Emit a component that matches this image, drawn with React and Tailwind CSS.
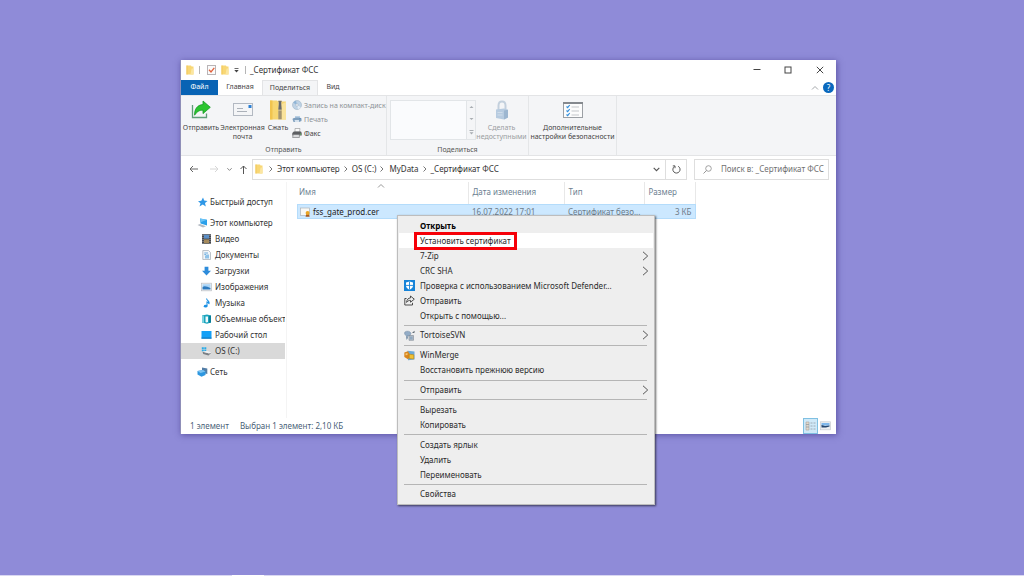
import React from "react";

function FolderIcon({ className }) {
  return (
    <svg className={className} viewBox="0 0 8 10" aria-hidden="true">
      <path d="M0.5 0.5H5L5.6 1.5H7.5V9.5H0.5Z" fill="#f8d775" />
      <path d="M5.6 3.5H7.5V9.5H4.5Z" fill="#fbe6a2" />
      <path d="M0.5 0.5H1.5V9.5H0.5Z" fill="#f2c75a" />
    </svg>
  );
}

function CheckDocIcon() {
  return (
    <svg className="h-[10px] w-[9px]" viewBox="0 0 9 10" aria-hidden="true">
      <rect x="0.5" y="0.5" width="8" height="9" fill="#fbfbfb" stroke="#b9b4b6" />
      <path d="M2 4.8L4 7L7.3 2.8" fill="none" stroke="#e2613c" strokeWidth="1.3" />
    </svg>
  );
}

function Chevron({ className, d }) {
  return (
    <svg
      className={className}
      viewBox="0 0 8 8"
      fill="none"
      stroke="currentColor"
      aria-hidden="true"
    >
      <path d={d} />
    </svg>
  );
}

const RIGHT = "M2.5 1.5L5 4L2.5 6.5";
const DOWN = "M1.5 2.5L4 5L6.5 2.5";
const UP = "M1 5.5L4 2.5L7 5.5";

function ShareIcon() {
  return (
    <svg className="h-5 w-5" viewBox="0 0 20 20" aria-hidden="true">
      <path d="M1.5 5V17.5H15.5V13.5" fill="none" stroke="#5f9d78" strokeWidth="1.3" />
      <path
        d="M12 1L19.3 7.3L12 13.6V10.2C8.5 10 6 11.5 3.6 15.2C3.4 9 6.5 4.8 12 4.6Z"
        fill="#2bc52f"
        stroke="#159a25"
        strokeWidth="0.8"
      />
    </svg>
  );
}

function MailIcon() {
  return (
    <svg className="h-5 w-5" viewBox="0 0 20 20" aria-hidden="true">
      <rect x="0.5" y="3.5" width="19" height="12" fill="#f4f5f7" stroke="#b3b9c2" />
      <path d="M4 8.5H10M4 11.5H14" stroke="#abb1b9" />
      <rect x="15.5" y="5" width="3" height="3" fill="#2b7fd4" />
    </svg>
  );
}

function ZipIcon() {
  return (
    <svg className="h-5 w-5" viewBox="0 0 20 20" aria-hidden="true">
      <path d="M2 0.5H9L10 1.5H18V19.5H2Z" fill="#f7d671" />
      <path d="M2 0.5H4.5V19.5H2Z" fill="#f1c44f" />
      <path d="M14 4L18 2V19.5H14Z" fill="#fae39b" />
      <rect x="10.3" y="0.5" width="3.4" height="19" fill="#c1b28d" />
      <path d="M10.5 1.5H13.5M10.5 12H13.5M10.5 14H13.5M10.5 16H13.5M10.5 18H13.5" stroke="#7a6d50" strokeWidth="0.9" />
      <path d="M11 1.5H13V4.5L13.6 9.5H10.4L11 4.5Z" fill="#66686c" />
    </svg>
  );
}

function DiscIcon() {
  return (
    <svg className="h-[10px] w-[10px]" viewBox="0 0 10 10" aria-hidden="true">
      <circle cx="5" cy="5" r="4.5" fill="#bfd3e6" stroke="#a9bbcd" strokeWidth="0.7" />
      <path d="M5 5L1.2 2.8A4.4 4.4 0 0 1 4 0.8Z" fill="#8fb4d6" />
      <path d="M5 5L8.8 7.2A4.4 4.4 0 0 1 6 9.2Z" fill="#e4edf5" />
      <circle cx="5" cy="5" r="1.3" fill="#f4f5f7" stroke="#9fb2c4" strokeWidth="0.6" />
    </svg>
  );
}

function PrinterIcon() {
  return (
    <svg className="h-[10px] w-[10px]" viewBox="0 0 10 10" aria-hidden="true">
      <path d="M3 2H8V4H3Z" fill="#b8cfe4" />
      <path d="M0.5 5C1.5 3.2 8 3 9.5 4.5V7L7 8H1.5Z" fill="#7f9fbd" />
      <path d="M2.5 6H7V8H3Z" fill="#d5e2ee" />
      <circle cx="8" cy="4.7" r="0.6" fill="#4c87bd" />
    </svg>
  );
}

function FaxIcon() {
  return (
    <svg className="h-[10px] w-[10px]" viewBox="0 0 10 10" aria-hidden="true">
      <path d="M3 0.5H8L7.5 4H3Z" fill="#fafafa" stroke="#8e9092" strokeWidth="0.6" />
      <path d="M0.3 5L1.8 3.5H9L9.7 5V7.5H0.3Z" fill="#5d5f62" />
      <path d="M1.2 6.5H7.4V9.5H0.6Z" fill="#d9dadc" stroke="#6f7173" strokeWidth="0.6" />
      <circle cx="8.5" cy="6.2" r="0.6" fill="#58c05a" />
    </svg>
  );
}

function LockIcon() {
  return (
    <svg className="h-5 w-5" viewBox="0 0 20 20" aria-hidden="true">
      <path d="M6.5 10V5.5C6.5 0 13.5 0 13.5 5.5V10" fill="none" stroke="#c3d0dd" strokeWidth="2" />
      <path d="M4 9.5L12 8.5L16 9.8V17.5L12 19.5L4 18Z" fill="#b7cbe0" />
      <path d="M12 10.5L16 9.8V17.5L12 19.5Z" fill="#9db6d0" />
      <path d="M5.5 12.5H10.5M5.5 15H10.5" stroke="#cfdcea" />
    </svg>
  );
}

function ChecklistIcon() {
  return (
    <svg className="h-5 w-5" viewBox="0 0 20 20" aria-hidden="true">
      <rect x="0.5" y="2.5" width="19" height="15" fill="#fcfcfc" stroke="#9ca0a5" />
      <path d="M0 3H20" stroke="#85898e" strokeWidth="2" />
      <path d="M8.5 7H16M8.5 11H16M8.5 15H16" stroke="#c3c6ca" />
      <path
        d="M3.5 6.5L4.7 7.7L6.7 5M3.5 10.5L4.7 11.7L6.7 9M3.5 14.5L4.7 15.7L6.7 13"
        fill="none"
        stroke="#3590dc"
        strokeWidth="1.2"
      />
    </svg>
  );
}

const sideIcons = {
  star: (
    <path
      d="M6 0.5L7.2 3.5L10.5 4L8 6L8.8 9.5L5.8 7.6L2.5 9.5L3.5 6.2L1 4.2L4.3 3.8Z"
      fill="#2f97e6"
    />
  ),
  computer: (
    <>
      <path d="M3 0.5L10 1.8V7.5L3.5 5.5Z" fill="#2ba0ea" />
      <path d="M3 0.5L10 1.8L4 4Z" fill="#6cc4f6" />
      <path d="M0.5 7L3 6L9 8.2L6 9.6Z" fill="#b3bac2" />
    </>
  ),
  video: (
    <>
      <rect x="1" y="0.2" width="9" height="9.6" fill="#44474d" />
      <path d="M3 0.8H8V4.6H3Z" fill="#5b8fc7" />
      <path d="M3 5.4H8V9.2H3Z" fill="#a58a5c" />
      <path d="M2 1V9.5M9 1V9.5" stroke="#c7c9cc" strokeWidth="0.7" strokeDasharray="1 1" />
    </>
  ),
  docs: (
    <>
      <path d="M1.8 0.5H7.5L9.5 2.5V9.5H1.8Z" fill="#f2f5f8" stroke="#a3abb3" strokeWidth="0.7" />
      <path d="M3.3 3H7M3.3 4.6H5" stroke="#4a9bd8" strokeWidth="0.8" />
      <path d="M5.5 4.5H8V8.5H4V6Z" fill="#8fc2e8" />
    </>
  ),
  downloads: <path d="M3.6 0.8H7.4V4.8H10L5.5 9.5L1 4.8H3.6Z" fill="#2d8cdb" />,
  images: (
    <>
      <rect x="0.5" y="1.2" width="10" height="7.6" fill="#f3f5f7" stroke="#b7bcc2" strokeWidth="0.7" />
      <path d="M1.5 2.2H9.5V5H1.5Z" fill="#a9d4f6" />
      <path d="M1.5 5C4 3.2 6 5 9.5 5.8V7.4H1.5Z" fill="#2b79be" />
    </>
  ),
  music: (
    <>
      <path d="M5.5 0.5C6 3 9 3 8 6C7.8 4.5 6.8 4.2 6 4V8" fill="none" stroke="#1c91e4" strokeWidth="1.1" />
      <ellipse cx="4.6" cy="8.2" rx="1.8" ry="1.4" fill="#1c91e4" />
    </>
  ),
  objects: (
    <>
      <path d="M1 1.5L6 0.5L10 1.5V8.5L6 9.7L1 8.5Z" fill="#1ca4bd" />
      <path d="M1 1.5L3 2.2V9L1 8.5Z" fill="#7ad3e0" />
      <path d="M4.5 2.5H7V8L5.5 8.6L4.5 8Z" fill="#f1fafc" />
      <path d="M8 2L10 1.5V8.5L8 9Z" fill="#0c7e99" />
    </>
  ),
  desktop: (
    <>
      <rect x="0.5" y="1" width="10" height="7.6" fill="#14a0f6" />
      <path d="M0.5 7.6H10.5V8.6H0.5Z" fill="#0b6fb5" />
    </>
  ),
  drive: (
    <>
      <path d="M0.8 1.2H2.8V3H0.8ZM3.3 1.2H5.3V3H3.3ZM0.8 3.4H2.8V5.2H0.8ZM3.3 3.4H5.3V5.2H3.3Z" fill="#27abe8" />
      <path d="M1.5 5.8L8 7.2L10.5 6.5L7.5 9.4L2.2 8Z" fill="#7b8086" />
      <path d="M2 5.8L6 4.8L10.5 6.4L8 7.4Z" fill="#eef0f2" />
    </>
  ),
  network: (
    <>
      <path d="M5 0.5L10.3 1.5V7L5 5.8Z" fill="#527da6" />
      <path d="M0.5 4L6 3L8.5 4.5V8L4.5 9.7L0.5 7.5Z" fill="#2d97e0" />
      <path d="M0.5 4L6 3L8.5 4.5L3.5 6Z" fill="#7cc3f1" />
    </>
  ),
};

function SideIcon({ name }) {
  return (
    <svg className="h-[10px] w-[11px] shrink-0" viewBox="0 0 11 10" aria-hidden="true">
      {sideIcons[name]}
    </svg>
  );
}

const computerItems = [
  { icon: "video", label: "Видео" },
  { icon: "docs", label: "Документы" },
  { icon: "downloads", label: "Загрузки" },
  { icon: "images", label: "Изображения" },
  { icon: "music", label: "Музыка" },
  { icon: "objects", label: "Объемные объекты" },
  { icon: "desktop", label: "Рабочий стол" },
  { icon: "drive", label: "OS (C:)", selected: true },
];

const menuIcons = {
  defender: (
    <>
      <rect x="0" y="0" width="11" height="11" fill="#1683d8" />
      <path d="M5.5 1.6L9 2.6V5.5C9 7.6 7.5 8.8 5.5 9.7C3.5 8.8 2 7.6 2 5.5V2.6Z" fill="#ffffff" />
      <path d="M5.5 1.6V9.7M2 5.4H9" stroke="#1683d8" strokeWidth="0.9" />
    </>
  ),
  share: (
    <g fill="none" stroke="#3b3b3b" strokeWidth="0.9">
      <path d="M2.5 3.5H0.8V10H8.5V7.8" />
      <path d="M6.5 1L10.3 4.2L6.5 7.2V5.4C4.8 5.3 3.7 6 2.6 7.4C2.8 4.6 4.3 3 6.5 2.9Z" />
    </g>
  ),
  tortoise: (
    <>
      <path d="M0.8 2C3 0.6 6 1 7 3.2L5.8 6H2.5L0.6 4.2Z" fill="#93acc6" stroke="#7189a2" strokeWidth="0.5" />
      <path d="M2 6.5L3.5 5.5L4 8L2.5 10Z" fill="#7c93aa" />
      <path d="M5 5.5H9.5V10.3H5Z" fill="#b6c0ca" stroke="#7d8893" strokeWidth="0.6" />
      <path d="M8 3L10.5 0.8V2.8Z" fill="#4a5660" />
      <path d="M6 7.2H8.6M6 8.8H8.6" stroke="#5b87b3" strokeWidth="0.6" />
    </>
  ),
  winmerge: (
    <>
      <path d="M3.5 0.8L10.5 1.5V9.5L4 10.2Z" fill="#6caad8" />
      <path d="M0.3 2.5L4 1.2L6.5 5.5L4 9.2L0.3 7Z" fill="#d9861d" />
      <path d="M5.2 4.2L9.8 4.8V9L5.2 8.6Z" fill="#f1c131" stroke="#b98412" strokeWidth="0.6" />
      <path d="M1.5 3.5L3.5 3V5L1.5 5.3Z" fill="#f4c77a" />
    </>
  ),
};

const menuGroups = [
  [
    { label: "Открыть", bold: true },
    { label: "Установить сертификат", active: true },
    { label: "7-Zip", sub: true },
    { label: "CRC SHA", sub: true },
    { label: "Проверка с использованием Microsoft Defender...", icon: "defender" },
    { label: "Отправить", icon: "share" },
    { label: "Открыть с помощью..." },
  ],
  [{ label: "TortoiseSVN", icon: "tortoise", sub: true }],
  [{ label: "WinMerge", icon: "winmerge" }, { label: "Восстановить прежнюю версию" }],
  [{ label: "Отправить", sub: true }],
  [{ label: "Вырезать" }, { label: "Копировать" }],
  [{ label: "Создать ярлык" }, { label: "Удалить" }, { label: "Переименовать" }],
  [{ label: "Свойства" }],
];

function TitleBar() {
  return (
    <header className="flex h-5 items-center pl-[5px] text-[8px] text-[#333]">
      <FolderIcon className="h-[10px] w-2" />
      <span className="ml-[5px] h-2 w-px bg-[#b5b5b5]" />
      <span className="ml-[7px]">
        <CheckDocIcon />
      </span>
      <FolderIcon className="ml-[5px] h-[10px] w-2" />
      <svg className="ml-[5px] h-[6px] w-[5px]" viewBox="0 0 5 6" aria-hidden="true">
        <path d="M0.5 1.5H4.5" stroke="#444" strokeWidth="0.8" />
        <path d="M0.3 3H4.7L2.5 5.5Z" fill="#444" />
      </svg>
      <span className="ml-[6px] h-2 w-px bg-[#b5b5b5]" />
      <h1 className="ml-1">_Сертификат ФСС</h1>
      <div className="ml-auto flex text-[#444]">
        <button type="button" aria-label="Свернуть" className="flex h-5 w-[31px] items-center justify-center">
          <svg className="size-2" viewBox="0 0 8 8" fill="none" stroke="currentColor">
            <path d="M0.5 3.5H7.5" />
          </svg>
        </button>
        <button type="button" aria-label="Развернуть" className="flex h-5 w-[31px] items-center justify-center">
          <svg className="size-2" viewBox="0 0 8 8" fill="none" stroke="currentColor">
            <rect x="1" y="1" width="6" height="6" />
          </svg>
        </button>
        <button type="button" aria-label="Закрыть" className="flex h-5 w-[33px] items-center justify-center">
          <svg className="size-2" viewBox="0 0 8 8" fill="none" stroke="currentColor">
            <path d="M0.8 0.8L7.2 7.2M7.2 0.8L0.8 7.2" />
          </svg>
        </button>
      </div>
    </header>
  );
}

function RibbonTabs() {
  return (
    <div className="flex h-[15px] text-[7px] text-[#444]">
      <button type="button" className="w-[37px] bg-[#0863b4] text-white">
        Файл
      </button>
      <button type="button" className="w-[44px]">
        Главная
      </button>
      <button
        type="button"
        className="w-[56px] border-x border-t border-[#e3e4e6] bg-[#f4f5f7]"
      >
        Поделиться
      </button>
      <button type="button" className="w-[30px]">
        Вид
      </button>
      <div className="ml-auto flex items-center gap-1 pr-[2px]">
        <button type="button" aria-label="Свернуть ленту" className="text-[#a5a8ab]">
          <Chevron className="size-2" d={UP} />
        </button>
        <button
          type="button"
          aria-label="Справка"
          className="flex size-[11px] items-center justify-center rounded-full bg-[#0a68bd] text-[8px] leading-none text-white"
        >
          ?
        </button>
      </div>
    </div>
  );
}

function RibbonButton({ icon, className, children }) {
  return (
    <button type="button" className={`flex flex-col items-center gap-[3px] ${className}`}>
      {icon}
      <span className="whitespace-nowrap">{children}</span>
    </button>
  );
}

function RibbonGroup({ label, className, children }) {
  return (
    <section
      className={`flex shrink-0 flex-col justify-between border-r border-[#e4e6e8] pt-1 pb-px ${className}`}
    >
      <div className="flex">{children}</div>
      <p className="text-center text-[#555]">{label}</p>
    </section>
  );
}

function Ribbon() {
  return (
    <div className="flex h-[61px] overflow-hidden border-y border-[#e3e4e6] bg-[#f4f5f7] text-[7px] leading-[9px] text-[#444]">
      <RibbonGroup label="Отправить" className="w-[206px]">
        <RibbonButton className="w-[40px]" icon={<ShareIcon />}>
          Отправить
        </RibbonButton>
        <RibbonButton className="w-[43px]" icon={<MailIcon />}>
          Электронная
          <br />
          почта
        </RibbonButton>
        <RibbonButton className="w-[28px]" icon={<ZipIcon />}>
          Сжать
        </RibbonButton>
        <div className="flex flex-col gap-1">
          <button type="button" className="flex h-[10px] items-center gap-[2px] whitespace-nowrap text-[#8d9196]">
            <DiscIcon />
            Запись на компакт-диск
          </button>
          <button type="button" className="flex h-[10px] items-center gap-[2px] text-[#8d9196]">
            <PrinterIcon />
            Печать
          </button>
          <button type="button" className="flex h-[10px] items-center gap-[2px]">
            <FaxIcon />
            Факс
          </button>
        </div>
      </RibbonGroup>
      <RibbonGroup label="Поделиться" className="w-[142px]">
        <div className="ml-[3px] flex h-10 w-[86px] border border-[#e2e5e8] bg-[#fafbfd]">
          <div className="flex-1" />
          <div className="flex w-[9px] flex-col items-center justify-around border-l border-[#e2e5e8] bg-[#f4f5f7]">
            <svg className="h-1 w-[5px]" viewBox="0 0 5 4">
              <path d="M0.5 3H4.5L2.5 1Z" fill="#a9adb2" />
            </svg>
            <svg className="h-1 w-[5px]" viewBox="0 0 5 4">
              <path d="M0.5 1H4.5L2.5 3Z" fill="#a9adb2" />
            </svg>
            <svg className="h-[5px] w-[5px]" viewBox="0 0 5 5">
              <path d="M0.5 0.5H4.5" stroke="#a9adb2" />
              <path d="M0.5 2.3H4.5L2.5 4.5Z" fill="#a9adb2" />
            </svg>
          </div>
        </div>
        <RibbonButton className="w-[51px] text-[#9a9da1]" icon={<LockIcon />}>
          Сделать
          <br />
          недоступными
        </RibbonButton>
      </RibbonGroup>
      <RibbonGroup className="w-[88px]">
        <RibbonButton className="w-full" icon={<ChecklistIcon />}>
          Дополнительные
          <br />
          настройки безопасности
        </RibbonButton>
      </RibbonGroup>
    </div>
  );
}

function NavBar() {
  return (
    <div className="flex h-[26px] items-center gap-[7px] pl-2 pr-[7px] text-[8px] text-[#333]">
      <div className="flex items-center">
        <button type="button" aria-label="Назад" className="w-[21px]">
          <svg className="h-2 w-[9px]" viewBox="0 0 9 8" fill="none" stroke="#666">
            <path d="M9 4H1M4 1L1 4L4 7" />
          </svg>
        </button>
        <button type="button" aria-label="Вперед" className="w-4">
          <svg className="h-2 w-[9px]" viewBox="0 0 9 8" fill="none" stroke="#d6d6d6">
            <path d="M0 4H8M5 1L8 4L5 7" />
          </svg>
        </button>
        <button type="button" aria-label="Последние расположения" className="w-[14px] text-[#777]">
          <Chevron className="size-[7px]" d={DOWN} />
        </button>
        <button type="button" aria-label="Вверх">
          <svg className="h-[9px] w-[7px]" viewBox="0 0 7 9" fill="none" stroke="#555">
            <path d="M3.5 9V1M0.5 4L3.5 1L6.5 4" />
          </svg>
        </button>
      </div>
      <nav
        aria-label="Путь"
        className="-ml-[2px] flex h-[21px] flex-1 items-center border border-[#dedede] pl-[2px]"
      >
        <FolderIcon className="mr-1 h-[10px] w-2" />
        <Chevron className="mr-[2px] size-2 text-[#777]" d={RIGHT} />
        <a href="#pc" className="mr-[2px]">Этот компьютер</a>
        <Chevron className="mr-[2px] size-2 text-[#777]" d={RIGHT} />
        <a href="#c" className="mr-[2px]">OS (C:)</a>
        <Chevron className="mr-[3px] size-2 text-[#777]" d={RIGHT} />
        <a href="#mydata" className="mr-[2px]">MyData</a>
        <Chevron className="mr-[2px] size-2 text-[#777]" d={RIGHT} />
        <a href="#cert">_Сертификат ФСС</a>
        <button type="button" aria-label="Предыдущие расположения" className="ml-auto mr-1 text-[#555]">
          <Chevron className="size-[9px]" d={DOWN} />
        </button>
        <button
          type="button"
          aria-label="Обновить"
          className="flex h-full w-[21px] items-center justify-center border-l border-[#dedede]"
        >
          <svg className="size-[9px]" viewBox="0 0 9 9" fill="none" stroke="#555">
            <path d="M6.2 1.3A3.6 3.6 0 1 1 2.4 1.5" />
            <path d="M0.8 0.9H3V3.2" />
          </svg>
        </button>
      </nav>
      <label className="flex h-[21px] w-[135px] items-center gap-[9px] border border-[#dedede] pl-2">
        <svg className="size-[9px] shrink-0" viewBox="0 0 9 9" fill="none" stroke="#8a8a8a" aria-hidden="true">
          <circle cx="5.5" cy="3.5" r="2.8" strokeWidth="0.8" />
          <path d="M3.5 5.5L0.5 8.5" strokeWidth="0.9" />
        </svg>
        <input
          type="text"
          aria-label="Поиск"
          placeholder="Поиск в: _Сертификат ФСС"
          className="w-full min-w-0 outline-none placeholder:text-[#707070]"
        />
      </label>
    </div>
  );
}

function Sidebar() {
  return (
    <aside className="flex w-[104px] shrink-0 flex-col gap-[5px] pt-3 text-[8px] text-[#333]">
      <a href="#quick" className="flex h-4 items-center gap-[2px] whitespace-nowrap pl-4">
        <SideIcon name="star" />
        Быстрый доступ
      </a>
      <div>
        <a href="#pc" className="flex h-4 items-center gap-[2px] whitespace-nowrap pl-4">
          <SideIcon name="computer" />
          Этот компьютер
        </a>
        <ul>
          {computerItems.map((item) => (
            <li key={item.label}>
              <a
                href="#folder"
                className={`flex h-4 items-center gap-[3px] overflow-hidden whitespace-nowrap pl-5 ${
                  item.selected ? "bg-[#d9d9d9]" : ""
                }`}
              >
                <SideIcon name={item.icon} />
                {item.label}
              </a>
            </li>
          ))}
        </ul>
      </div>
      <a href="#network" className="flex h-4 items-center gap-[2px] whitespace-nowrap pl-4">
        <SideIcon name="network" />
        Сеть
      </a>
    </aside>
  );
}

function FileList() {
  return (
    <div className="ml-px flex-1 border-l border-[#f4f4f4] pl-[10px]">
      <table className="w-[399px] table-fixed text-left text-[8px]">
        <thead className="text-[#6d7f92]">
          <tr className="h-[22px]">
            <th scope="col" className="relative w-[171px] border-r border-[#e8e8e8] p-0 pb-[2px] pl-[2px] font-normal">
              Имя
              <Chevron className="absolute left-[80px] top-0 size-2 text-[#999]" d={UP} />
            </th>
            <th scope="col" className="w-[96px] border-r border-[#e8e8e8] p-0 pb-[2px] pl-1 font-normal">Дата изменения</th>
            <th scope="col" className="w-[80px] border-r border-[#e8e8e8] p-0 pb-[2px] pl-1 font-normal">Тип</th>
            <th scope="col" className="border-r border-[#e8e8e8] p-0 pb-[2px] pl-1 font-normal">Размер</th>
          </tr>
        </thead>
        <tbody>
          <tr className="h-[15px] bg-[#cce8ff] text-[#6d7b89] outline outline-[#b4dcfb] -outline-offset-1">
            <td className="p-0 pl-[3px] text-[#222]">
              <span className="flex items-center gap-[2px]">
                <svg className="h-[10px] w-[11px]" viewBox="0 0 11 10" aria-hidden="true">
                  <rect x="0.5" y="1" width="9" height="7.5" fill="#f8f8f5" stroke="#aeb4b8" strokeWidth="0.7" />
                  <path d="M6.5 7L5.5 9.8H9.7L8.7 7Z" fill="#a5571f" />
                  <circle cx="7.6" cy="6" r="2" fill="#e9a524" />
                </svg>
                fss_gate_prod.cer
              </span>
            </td>
            <td className="p-0 pl-1">16.07.2022 17:01</td>
            <td className="p-0 pl-1">Сертификат безо...</td>
            <td className="p-0 pr-1 text-right">3 КБ</td>
          </tr>
        </tbody>
      </table>
    </div>
  );
}

function StatusBar() {
  return (
    <footer className="flex h-4 items-center pl-[9px] text-[8px] text-[#4a5f78]">
      <span>1 элемент</span>
      <span className="ml-[11px]">Выбран 1 элемент: 2,10 КБ</span>
      <div className="ml-auto flex items-center gap-[2px] pr-[5px]">
        <button
          type="button"
          aria-label="Таблица"
          className="flex h-4 w-[15px] items-center justify-center border border-[#7fc0e2] bg-[#cfe9f8]"
        >
          <svg className="h-[10px] w-[11px]" viewBox="0 0 11 10">
            <path d="M1 1H4V9H1Z" fill="#e3d9ca" stroke="#a9a39a" strokeWidth="0.6" />
            <path d="M1 3.5H4M1 6H4M5.5 2H7.5M5.5 5H7.5M5.5 8H7.5M8.5 2H10.5M8.5 5H10.5M8.5 8H10.5" stroke="#929da6" strokeWidth="0.8" />
          </svg>
        </button>
        <button type="button" aria-label="Крупные значки">
          <svg className="h-[10px] w-[11px]" viewBox="0 0 11 10">
            <rect x="0.5" y="0.8" width="10" height="8" fill="#eceef0" stroke="#c9cdd1" strokeWidth="0.7" />
            <path d="M1.5 2H9.5V4.6H1.5Z" fill="#7fb8ec" />
            <path d="M1.5 4L5 5L9.5 4.4V5.6L6 6.6H1.5Z" fill="#24466f" />
          </svg>
        </button>
      </div>
    </footer>
  );
}

function MenuItem({ item }) {
  return (
    <li role="none">
      <button
        type="button"
        role="menuitem"
        className={`flex h-[15px] w-full items-center gap-[5px] pl-[5px] pr-1 text-left ${
          item.active ? "bg-white" : ""
        } ${item.bold ? "font-bold text-black" : ""}`}
      >
        <svg className="size-[11px] shrink-0" viewBox="0 0 11 11" aria-hidden="true">
          {menuIcons[item.icon]}
        </svg>
        {item.active ? (
          <span className="-mx-[6px] flex h-[18px] shrink-0 items-center border-[3px] border-[#f60008] px-[3px]">
            {item.label}
          </span>
        ) : (
          <span>{item.label}</span>
        )}
        {item.sub && (
          <svg
            className="ml-auto h-[10px] w-[7px]"
            viewBox="0 0 7 10"
            fill="none"
            stroke="#555"
            aria-hidden="true"
          >
            <path d="M1 0.8L5.7 5L1 9.2" />
          </svg>
        )}
      </button>
    </li>
  );
}

function ContextMenu() {
  return (
    <ul
      role="menu"
      className="absolute left-[216px] top-[155px] flex min-h-[290px] w-[258px] flex-col border border-[#bdbdbd] bg-[#eeeeee] px-px py-[2px] text-[8px] text-[#2b2b2b] shadow-[1px_1px_2px_rgba(0,0,0,0.6)]"
    >
      {menuGroups.map((group, i) => (
        <React.Fragment key={i}>
          {i > 0 && (
            <li role="separator" className="flex grow items-center pl-[5px] pr-[6px]">
              <span className="h-px w-full bg-[#b5b5b5]" />
            </li>
          )}
          {group.map((item) => (
            <MenuItem key={item.label} item={item} />
          ))}
        </React.Fragment>
      ))}
    </ul>
  );
}

export default function App() {
  return (
    <main className="flex min-h-screen flex-col justify-between bg-[#8f8bd8] font-['Noto_Sans','Open_Sans',sans-serif]">
      <div className="relative mt-[60px] ml-[180px] mr-[188px] flex min-h-[374px] flex-col border-l border-[#8f8fb8] bg-white shadow-[1px_1px_6px_rgba(40,30,110,0.5)]">
        <TitleBar />
        <RibbonTabs />
        <Ribbon />
        <NavBar />
        <div className="flex flex-1">
          <Sidebar />
          <FileList />
        </div>
        <StatusBar />
        <ContextMenu />
      </div>
      <div className="h-px bg-[#d9d7f2]">
        <div className="ml-[232px] h-px w-8 bg-white" />
      </div>
    </main>
  );
}
